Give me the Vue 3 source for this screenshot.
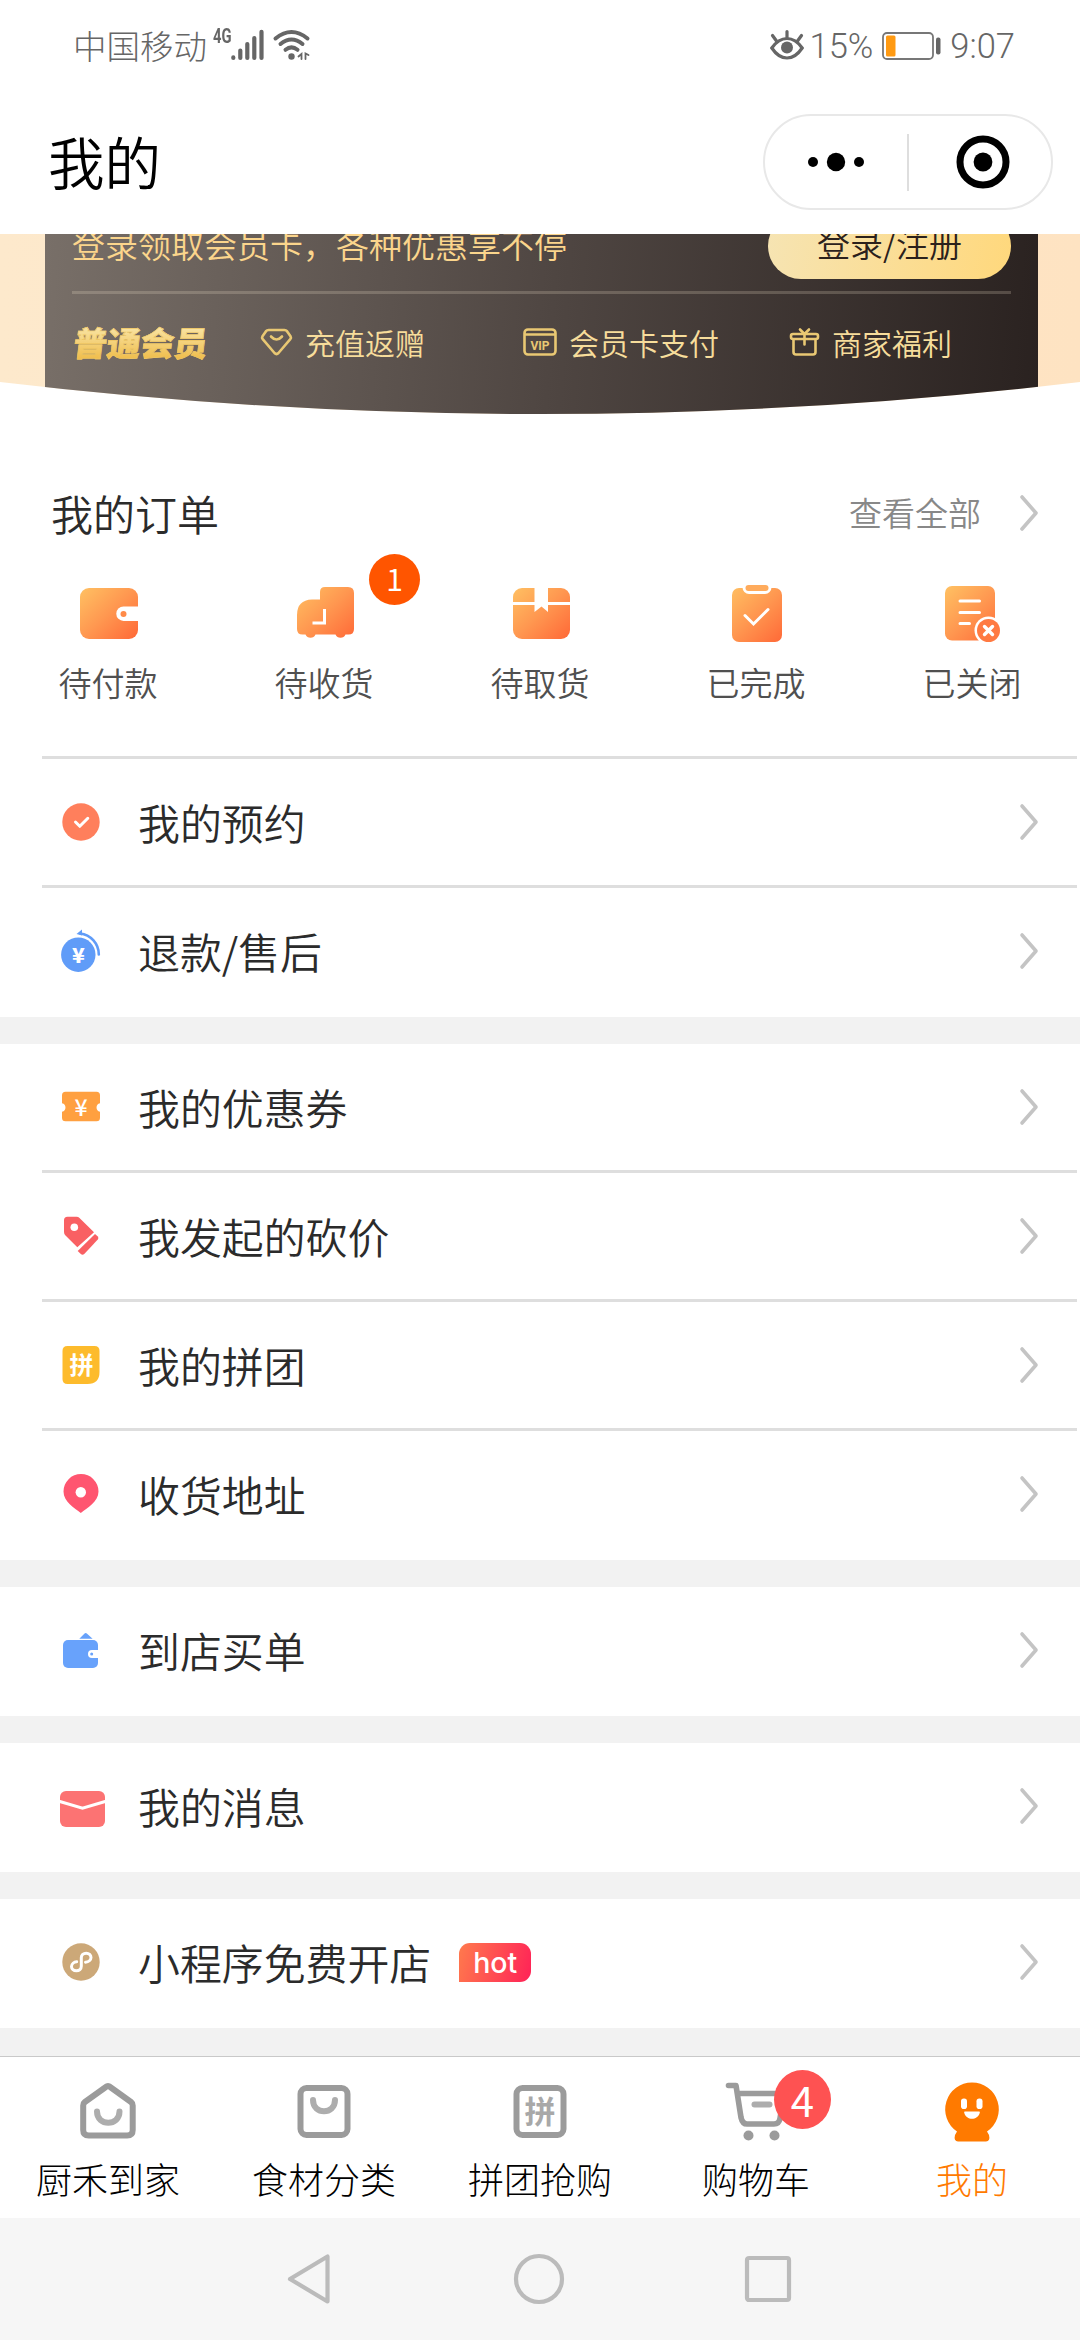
<script setup>
const orders = [
  { icon: 'wallet', label: '待付款' },
  { icon: 'truck', label: '待收货', badge: 1 },
  { icon: 'box', label: '待取货' },
  { icon: 'done', label: '已完成' },
  { icon: 'closed', label: '已关闭' },
]

const groups = [
  [
    { icon: 'booking', label: '我的预约' },
    { icon: 'refund', label: '退款/售后' },
  ],
  [
    { icon: 'coupon', label: '我的优惠券' },
    { icon: 'bargain', label: '我发起的砍价' },
    { icon: 'group', label: '我的拼团' },
    { icon: 'address', label: '收货地址' },
  ],
  [{ icon: 'pay', label: '到店买单' }],
  [{ icon: 'message', label: '我的消息' }],
  [{ icon: 'mini', label: '小程序免费开店', tag: 'hot' }],
]

const tabs = [
  { icon: 'home', label: '厨禾到家' },
  { icon: 'bag', label: '食材分类' },
  { icon: 'pin', label: '拼团抢购' },
  { icon: 'cart', label: '购物车', badge: 4 },
  { icon: 'me', label: '我的', active: true },
]
</script>

<template>
  <div class="page">
    <div class="status">
      <span class="carrier">中国移动</span>
      <span class="net">4G</span>
      <svg class="signal" width="34" height="32" viewBox="0 0 34 32" fill="none" stroke="#666" stroke-width="4.2" stroke-linecap="round">
        <path d="M2.3 28.4v.5M9.3 21.5v7.4M16.3 15v13.9M23.3 9v19.9M30.5 2.8v26.1" />
      </svg>
      <svg class="wifi" width="38" height="32" viewBox="0 0 38 32" fill="none" stroke="#666" stroke-width="4" stroke-linecap="round">
        <path d="M2.5 9.5Q18.500-3.500 34.500 9.500M7.500 15Q18.500 6 29.500 15M12.500 20.800Q18.500 16 24.500 20.800" />
        <circle cx="18.500" cy="27.500" r="3.200" fill="#666" stroke="none" />
        <path d="M25.500 27.500l3-2.500v5M32.500 30v-5.500l3 1.500" stroke-width="1.800" />
      </svg>
      <span class="grow"></span>
      <svg class="eye" width="34" height="32" viewBox="0 0 34 32" fill="none" stroke="#666" stroke-width="3.200" stroke-linecap="round">
        <path d="M1.800 19Q8.500 9.500 17 9.500T32.200 19Q25.500 29 17 29T1.800 19Z" />
        <circle cx="17" cy="18.500" r="6" fill="#666" stroke="none" />
        <path d="M17 8V2.500M6.500 12L2.500 6.500M27.500 12l4-5.500" />
      </svg>
      <span class="num pct">15%</span>
      <svg class="battery" width="59" height="28" viewBox="0 0 59 28">
        <rect x="1" y="1" width="50" height="26" rx="4" fill="none" stroke="#777" stroke-width="1.800" />
        <rect x="4" y="3.500" width="9.500" height="21" rx="1.500" fill="#ff9a12" />
        <rect x="54" y="5.500" width="4.500" height="17" rx="2" fill="#666" />
      </svg>
      <span class="num">9:07</span>
    </div>

    <header class="head">
      <h1>我的</h1>
      <div class="capsule">
        <svg class="dots" width="56" height="20" viewBox="0 0 56 20">
          <circle cx="5" cy="10" r="5" /><circle cx="28" cy="10" r="9.200" /><circle cx="51" cy="10" r="5" />
        </svg>
        <span class="sep"></span>
        <svg class="target" width="54" height="54" viewBox="0 0 54 54">
          <circle cx="27" cy="27" r="23" fill="none" stroke="#000" stroke-width="7" /><circle cx="27" cy="27" r="9.400" />
        </svg>
      </div>
    </header>

    <section class="banner">
      <div class="hero">
        <div class="card">
          <div class="card-top">
            <span class="slogan">登录领取会员卡，各种优惠享不停</span>
            <span class="login">登录/注册</span>
          </div>
          <div class="perks">
            <span class="level">普通会员</span>
            <span class="perk">
              <svg width="33" height="28" viewBox="0 0 33 28" fill="none" stroke="#e9c873" stroke-width="2.600" stroke-linejoin="round" stroke-linecap="round">
                <path d="M8.500 2h16q1.500 0 2.500 1.200l3.500 5q1 1.600-.2 3L18.500 25q-2 2-4 0L2.700 11.200q-1.200-1.400-.2-3L6 3.200Q7 2 8.500 2ZM11 8.500q5.500 6 11 0" />
              </svg>充值返赠</span>
            <span class="perk">
              <svg width="34" height="28" viewBox="0 0 34 28" fill="none" stroke="#e9c873" stroke-width="2.600">
                <rect x="1.500" y="1.500" width="31" height="25" rx="3.500" /><path d="M2 6.500h30" />
                <text x="17" y="21.500" text-anchor="middle" class="vip">VIP</text>
              </svg>会员卡支付</span>
            <span class="perk">
              <svg width="31" height="28" viewBox="0 0 30 28" fill="none" stroke="#e9c873" stroke-width="2.600" stroke-linecap="round" stroke-linejoin="round">
                <rect x="1.500" y="6" width="27" height="5" rx="2" /><path d="M4 11.500V24q0 2.500 2.500 2.500h17q2.500 0 2.500-2.500V11.500M15 7v9.500M10.500 1.500L15 6l4.500-4.500" />
              </svg>商家福利</span>
          </div>
        </div>
      </div>
    </section>

    <section class="orders">
      <div class="orders-head">
        <h2>我的订单</h2>
        <span class="all">查看全部</span>
        <svg class="chev" width="20" height="38" viewBox="0 0 20 38"><path d="M3 3l14 16L3 35" /></svg>
      </div>
      <div class="order-list">
        <div v-for="o in orders" :key="o.icon" class="order">
          <svg width="64" height="64" viewBox="0 0 64 64" fill="none">
            <defs>
              <linearGradient :id="'g-' + o.icon" x1="6" y1="6" x2="58" y2="60" gradientUnits="userSpaceOnUse">
                <stop offset="0" stop-color="#ffc062" /><stop offset=".5" stop-color="#ff9750" /><stop offset="1" stop-color="#ff6a38" />
              </linearGradient>
            </defs>
            <g v-if="o.icon === 'wallet'">
              <rect x="4" y="7" width="58" height="51" rx="9" :fill="`url(#g-${o.icon})`" />
              <path d="M63 25.500H47.500a7.200 7.200 0 0 0 0 14.400H63Z" fill="#fff" />
              <circle cx="47.500" cy="33" r="3" fill="#ff8a48" />
            </g>
            <g v-else-if="o.icon === 'truck'">
              <path :fill="`url(#g-${o.icon})`" d="M33 6h23q6 0 6 6v36q0 5.500-5.500 5.500H53.500a5.500 5.500 0 0 1-10 0h-20a5.500 5.500 0 0 1-10 0H10.500q-5.500 0-5.500-5.500V34Q5 19 20 18.500h8V11q0-5 5-5Z" />
              <path d="M32.500 28v14H20.500" stroke="#fff" stroke-width="3" />
            </g>
            <g v-else-if="o.icon === 'box'">
              <rect x="5" y="7" width="57" height="51" rx="9" :fill="`url(#g-${o.icon})`" />
              <path d="M5 22.500h57" stroke="#fff" stroke-width="2.800" />
              <path d="M26.500 5v26l7-5.500 6.500 5.500V5Z" fill="#fff" />
            </g>
            <g v-else-if="o.icon === 'done'">
              <rect x="8" y="7" width="50" height="54" rx="7" :fill="`url(#g-${o.icon})`" />
              <rect x="18.500" y="0" width="29" height="13" rx="6.500" fill="#fff" />
              <rect x="21.500" y="4" width="23" height="6" rx="3" fill="#ffab5c" />
              <path d="M21 34.500l8.500 8.500L44 28.500" stroke="#fff" stroke-width="3" stroke-linecap="round" />
            </g>
            <g v-else>
              <rect x="5" y="5" width="50" height="54.500" rx="7" :fill="`url(#g-${o.icon})`" />
              <path d="M20 20h19.500M20 31.500h19.500M20 42.500h9.500" stroke="#fff" stroke-width="3" stroke-linecap="round" />
              <circle cx="48.500" cy="49.500" r="14" fill="#fff" /><circle cx="48.500" cy="49.500" r="11.500" fill="#ff7a42" />
              <path d="M44.500 45.500l8 8m0-8l-8 8" stroke="#fff" stroke-width="3.400" stroke-linecap="round" />
            </g>
          </svg>
          <span>{{ o.label }}</span>
          <i v-if="o.badge" class="badge">{{ o.badge }}</i>
        </div>
      </div>
    </section>

    <section v-for="(g, i) in groups" :key="i" class="group">
      <div v-for="r in g" :key="r.icon" class="row">
        <svg class="row-icon" width="48" height="48" viewBox="0 0 48 48" fill="none">
          <g v-if="r.icon === 'booking'">
            <circle cx="24" cy="24" r="18.700" fill="#ff7f5c" />
            <path d="M18.500 24l4.300 4.300 8-8" stroke="#fff" stroke-width="3" stroke-linecap="round" stroke-linejoin="round" />
          </g>
          <g v-else-if="r.icon === 'refund'">
            <circle cx="21.300" cy="27.700" r="17.200" fill="#609cf8" />
            <path d="M23 6.500A21 21 0 0 1 41.800 27.500" stroke="#609cf8" stroke-width="2.600" stroke-linecap="round" />
            <path d="M19.500 7l5.500-4.500v6Z" fill="#609cf8" />
            <text x="21.300" y="35.500" text-anchor="middle" class="yen bold">¥</text>
          </g>
          <g v-else-if="r.icon === 'coupon'">
            <path fill="#ffa040" d="M8.500 8.700h31q3.500 0 3.500 3.500v8a4.400 4.400 0 0 0 0 8.600v6q0 3.500-3.500 3.500h-31Q5 38.300 5 34.800v-6a4.400 4.400 0 0 0 0-8.600v-8q0-3.500 3.500-3.500Z" />
            <text x="24" y="32.500" text-anchor="middle" class="yen">¥</text>
          </g>
          <g v-else-if="r.icon === 'bargain'" fill="#f96063">
            <path d="M10.500 4.700h9q1.800 0 3 1.200L37 20.300 20.300 35.300 8.500 23.500Q7 22 7 20V8.200q0-3.500 3.500-3.500Z" />
            <path d="M38 22l2.800 2.500q1.300 1.500 0 3L27.500 41.800q-2 1.600-3.700.2L20.700 39Z" />
            <circle cx="17.300" cy="15.300" r="3.800" fill="#fff" />
          </g>
          <g v-else-if="r.icon === 'group'">
            <path fill="#fdbb2c" d="M10.500 5h27q5 0 5 5v21q0 12-12 12h-20q-5 0-5-5V10q0-5 5-5Z" />
            <text x="24.500" y="33" text-anchor="middle" class="pin-text">拼</text>
          </g>
          <g v-else-if="r.icon === 'address'">
            <path fill="#ff5570" d="M24 4a17.500 17.500 0 0 1 17.500 17.500C41.500 32 30 38 23.800 43 17.500 38 6.500 32 6.500 21.500A17.500 17.500 0 0 1 24 4Z" />
            <circle cx="23.800" cy="22.300" r="5.200" fill="#fff" />
          </g>
          <g v-else-if="r.icon === 'pay'" fill="#68a2fb">
            <rect x="6" y="14" width="35" height="28" rx="5" />
            <path d="M22.300 12.800l5-5q1.400-1.400 2.800 0l5.500 5Z" />
            <path d="M42 24H35a4 4 0 0 0 0 8h7Z" fill="#fff" /><circle cx="34.700" cy="28" r="1.500" />
          </g>
          <g v-else-if="r.icon === 'message'">
            <rect x="3" y="9" width="45" height="36" rx="6" fill="#fc7373" />
            <path d="M2 19.200l23.500 7 23.500-7" stroke="#fff" stroke-width="3" />
          </g>
          <g v-else>
            <circle cx="24" cy="24" r="18.700" fill="#cca878" />
            <path d="M28.500 24.200c3.200-.2 5.500-2.200 5.500-4.700s-2-4.300-4.800-4.300-4.900 1.900-4.900 4.500v8.600c0 2.600-2.100 4.500-4.900 4.500s-4.900-1.800-4.900-4.300 2.400-4.600 5.200-4.800" stroke="#fff" stroke-width="3" stroke-linecap="round" />
          </g>
        </svg>
        <span class="row-label">{{ r.label }}</span>
        <span v-if="r.tag" class="hot">{{ r.tag }}</span>
        <svg class="chev" width="20" height="38" viewBox="0 0 20 38"><path d="M3 3l14 16L3 35" /></svg>
      </div>
    </section>

    <nav class="tabs">
      <div v-for="t in tabs" :key="t.icon" class="tab" :class="{ active: t.active }">
        <svg width="64" height="64" viewBox="0 0 64 64" fill="none" stroke="#9b9b9b" stroke-width="6" stroke-linecap="round" stroke-linejoin="round">
          <g v-if="t.icon === 'home'">
            <path d="M34.500 8.200L55 23q1.700 1.300 1.700 3.500V51q0 5.500-5.500 5.500H12.700q-5.500 0-5.500-5.500V26.500q0-2.200 1.700-3.500L29.500 8.200q2.500-2 5 0Z" />
            <path d="M21 32.500c0 15 22.500 15 22.500 0" stroke="#adadad" />
          </g>
          <g v-else-if="t.icon === 'bag'">
            <rect x="8.500" y="9" width="47" height="47" rx="6" /><path d="M21 21c0 15 22 15 22 0" stroke="#adadad" />
          </g>
          <g v-else-if="t.icon === 'pin'">
            <rect x="8.500" y="9" width="47" height="47" rx="6" />
            <text x="32" y="44" text-anchor="middle" class="tab-pin">拼</text>
          </g>
          <g v-else-if="t.icon === 'cart'">
            <path d="M4.500 6.500h7.500l5 32q1.500 6.500 6 6.500h27q5 0 6-5.500L60 14.500H13.500" stroke-width="5.600" />
            <path d="M30.500 25.500h15" stroke="#adadad" />
            <circle cx="24.500" cy="56.500" r="5" fill="#9b9b9b" stroke="none" /><circle cx="50.500" cy="56.500" r="5" fill="#9b9b9b" stroke="none" />
          </g>
          <g v-else stroke="none" fill="#ff7a00">
            <path d="M32 3.500a26.800 26.800 0 0 1 15 49l2 3.500q1.500 6-3 6.500H18q-4.500-.5-3-6.500l2-3.500a26.800 26.800 0 0 1 15-49Z" />
            <rect x="21" y="19.500" width="6" height="10.500" rx="2.800" fill="#fff" /><rect x="36.500" y="19.500" width="6" height="10.500" rx="2.800" fill="#fff" />
            <path d="M25 32.500h14q1.200 0 .8 1.300c-2.300 8-13.300 8-15.600 0q-.4-1.300.8-1.300Z" fill="#fff" />
          </g>
        </svg>
        <span>{{ t.label }}</span>
        <i v-if="t.badge" class="tab-badge">{{ t.badge }}</i>
      </div>
    </nav>

    <div class="sysnav">
      <svg width="50" height="52" viewBox="0 0 50 52"><path d="M41.500 3.500v45L4 26Z" /></svg>
      <svg width="52" height="52" viewBox="0 0 52 52"><circle cx="26" cy="26" r="23" /></svg>
      <svg width="52" height="52" viewBox="0 0 52 52"><rect x="5" y="5" width="42" height="42" rx="2" /></svg>
    </div>
  </div>
</template>

<style>
body { background: #f2f2f2; }
</style>

<style scoped>
.page {
  width: 1080px;
  height: 2340px;
  overflow: hidden;
  display: flex;
  flex-direction: column;
  background: #f2f2f2;
  font-family: "Noto Sans CJK SC", "Noto Sans", sans-serif;
  font-weight: 350;
  color: #2b2b2b;
}
svg { display: block; flex: none; overflow: visible; }
h1, h2 { margin: 0; font-weight: inherit; }

.status {
  flex: none;
  height: 90px;
  padding: 0 65px 0 73px;
  background: #fff;
  display: flex;
  align-items: center;
  color: #666;
}
.carrier { font-size: 33.500px; line-height: 50px; font-weight: 300; }
.net { font: 700 18px/18px Roboto, sans-serif; letter-spacing: 0; margin: -18px 0 0 6px; width: 18px; transform: scale(.82, 1.12); transform-origin: left center; }
.wifi { margin-left: 8px; }
.grow { flex: 1; }
.num { font: 350 34.500px/40px Roboto, sans-serif; margin-top: 2px; }
.pct { margin: 2px 9px 0 6px; }
.battery { margin: 2px 9px 0 0; }

.head {
  flex: none;
  height: 144px;
  padding: 0 27px 0 48px;
  background: #fff;
  display: flex;
  align-items: center;
  justify-content: space-between;
}
h1 { font-size: 56.500px; line-height: 80px; margin-bottom: 5px; color: #000; }
.capsule {
  box-sizing: border-box;
  width: 290px;
  height: 96px;
  border: 2px solid #e8e8e8;
  border-radius: 48px;
  display: grid;
  grid-template-columns: 1fr 2px 1fr;
  align-items: center;
  justify-items: center;
}
.sep { width: 2px; height: 57px; background: #dedede; }
.target { margin-left: 5px; }

.banner { flex: none; background: #fff; }
.hero {
  box-sizing: border-box;
  height: 180px;
  padding: 0 42px 0 45px;
  background: linear-gradient(90deg, #fde9cc, #fee3c2);
  clip-path: path('M0 0H1080V148Q540 212 0 148Z');
}
.card {
  height: 100%;
  padding: 0 27px;
  background: linear-gradient(94deg, #786f68 0%, #4f4642 51%, #2a2220 100%);
}
.card-top {
  height: 57px;
  border-bottom: 3px solid rgba(255, 240, 215, .2);
  display: flex;
  align-items: flex-end;
  justify-content: space-between;
}
.slogan { font-size: 33px; line-height: 50px; margin-bottom: 22px; color: #fbd58c; }
.login {
  width: 243px;
  height: 66px;
  margin-bottom: 12px;
  border-radius: 33px;
  background: linear-gradient(100deg, #f6e4b3, #ffd87c);
  color: #2b211c;
  font-size: 33px;
  line-height: 60px;
  text-align: center;
}
.perks {
  height: 95px;
  display: grid;
  grid-template-columns: 188px 263px 266px 1fr;
  align-items: center;
}
.level {
  justify-self: start;
  font-size: 33.500px;
  font-weight: 900;
  line-height: 44px;
  margin-left: 2px;
  transform: skewX(-7deg);
  color: transparent;
  background: linear-gradient(180deg, #f8e2a0 20%, #f0bf50 85%);
  background-clip: text;
  -webkit-text-stroke: .6px #f0c763;
}
.perk { display: flex; align-items: center; gap: 12px; font-size: 30px; line-height: 44px; color: #f7dd9b; white-space: nowrap; }
.vip { font: 700 12px Roboto, sans-serif; fill: #e9c873; stroke: none; }

.orders { flex: none; height: 345px; background: #fff; }
.orders::after { content: ""; display: block; height: 3px; margin: 0 3px 0 42px; background: #dedede; }
.orders-head { height: 66px; padding: 66px 41px 0 51px; display: flex; align-items: center; }
h2 { flex: 1; font-size: 42px; line-height: 60px; }
.all { font-size: 33px; line-height: 50px; color: #888; margin: 0 38px 3px 0; }
.chev { fill: none; stroke: #c4c4c4; stroke-width: 3.600; stroke-linecap: round; stroke-linejoin: round; }
.order-list { height: 210px; display: grid; grid-template-columns: repeat(5, 1fr); }
.order { position: relative; display: flex; flex-direction: column; align-items: center; padding-top: 35px; font-size: 33px; color: #505050; }
.order > span { line-height: 50px; margin-top: 12px; }
.badge {
  position: absolute;
  left: 153px;
  top: 8px;
  width: 51px;
  height: 51px;
  border-radius: 50%;
  background: #f50;
  color: #fff;
  font-style: normal;
  font-weight: 400;
  font-size: 30px;
  line-height: 48px;
  text-align: center;
}

.group { flex: none; background: #fff; margin-bottom: 27px; }
.row { position: relative; box-sizing: border-box; height: 129px; padding: 0 41px 3px 57px; display: flex; align-items: center; }
.row:not(:last-child)::after { content: ""; position: absolute; left: 42px; right: 3px; bottom: 0; height: 3px; background: #dedede; }
.row-label { margin-left: 33px; font-size: 41.900px; line-height: 60px; }
.row .chev { margin-left: auto; }
.hot {
  width: 72px;
  height: 39px;
  margin-left: 28px;
  border-radius: 11px 11px 11px 0;
  background: linear-gradient(105deg, #ff7a4d, #ff2257);
  color: #fff;
  font: 500 28.500px/40px Inter, sans-serif;
  text-align: center;
}
.yen { font: 500 23px "Noto Sans CJK SC", sans-serif; fill: #fff; }
.yen.bold { font-size: 21px; font-weight: 900; }
.pin-text { font: 700 24px "Noto Sans CJK SC", sans-serif; fill: #fff; }

.tabs {
  flex: none;
  box-sizing: border-box;
  height: 162px;
  margin-top: 1px;
  border-top: 1px solid #c9c9c9;
  background: #fff;
  display: grid;
  grid-template-columns: repeat(5, 1fr);
}
.tab { position: relative; display: flex; flex-direction: column; align-items: center; padding-top: 22px; font-size: 36px; font-weight: 300; color: #000; }
.tab > span { line-height: 54px; margin-top: 8px; }
.tab.active { color: #ff7a00; }
.tab-pin { font: 700 31px "Noto Sans CJK SC", sans-serif; fill: #a8a8a8; stroke: none; }
.tab-badge {
  position: absolute;
  left: 126px;
  top: 13px;
  width: 57px;
  height: 59px;
  border-radius: 50%;
  background: #fe5252;
  color: #fff;
  font-style: normal;
  font-weight: 400;
  font-size: 42px;
  line-height: 57px;
  text-align: center;
}
.sysnav { flex: 1; background: #f6f6f6; display: flex; justify-content: center; align-items: center; gap: 177px; }
.sysnav svg { fill: none; stroke: #bbb; stroke-width: 4.200; stroke-linejoin: round; }
</style>
